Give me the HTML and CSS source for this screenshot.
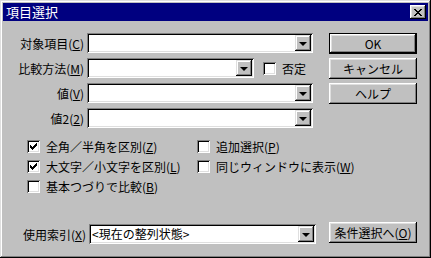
FILE: index.html
```html
<!DOCTYPE html>
<html lang="ja">
<head>
  <meta charset="UTF-8">
  <title>項目選択</title>
  <link rel="stylesheet" href="styles.css">
</head>
<body>
  <div class="window">
    <div class="titlebar">
      <span class="title">項目選択</span>
      <span class="close">
        <svg width="8" height="7" viewBox="0 0 8 7"><path d="M0 0h2v1h1v1h2v-1h1v-1h2v1h-1v1h-1v1h-1v1h1v1h1v1h1v1h-2v-1h-1v-1h-2v1h-1v1h-2v-1h1v-1h1v-1h1v-1h-1v-1h-1v-1h-1z" fill="#000"/></svg>
      </span>
    </div>

    <div class="body">
      <div class="main">
        <div class="fields">
          <label class="lbl">対象項目(<u>C</u>)</label>
          <div class="combo wide"><span class="val"></span><span class="drop"></span></div>

          <label class="lbl">比較方法(<u>M</u>)</label>
          <div class="row-neg">
            <div class="combo short"><span class="val"></span><span class="drop"></span></div>
            <label class="check"><span class="box"></span><span>否定</span></label>
          </div>

          <label class="lbl">値(<u>V</u>)</label>
          <div class="combo wide"><span class="val"></span><span class="drop"></span></div>

          <label class="lbl">値2(<u>2</u>)</label>
          <div class="combo wide"><span class="val"></span><span class="drop"></span></div>
        </div>

        <div class="checks">
          <label class="check"><span class="box checked"></span><span>全角／半角を区別(<u>Z</u>)</span></label>
          <label class="check"><span class="box"></span><span>追加選択(<u>P</u>)</span></label>
          <label class="check"><span class="box checked"></span><span>大文字／小文字を区別(<u>L</u>)</span></label>
          <label class="check"><span class="box"></span><span>同じウィンドウに表示(<u>W</u>)</span></label>
          <label class="check"><span class="box"></span><span>基本つづりで比較(<u>B</u>)</span></label>
        </div>
      </div>

      <div class="buttons">
        <button class="btn default">OK</button>
        <button class="btn">キャンセル</button>
        <button class="btn">ヘルプ</button>
      </div>
    </div>

    <div class="footer">
      <label class="lbl">使用索引(<u>X</u>)</label>
      <div class="combo index"><span class="val">&lt;現在の整列状態&gt;</span><span class="drop"></span></div>
      <button class="btn next">条件選択へ(<u>O</u>)</button>
    </div>
  </div>
</body>
</html>
```

FILE: styles.css
```css
* {
  box-sizing: border-box;
}

body {
  margin: 0;
  background: #c0c0c0;
  font-family: "Noto Sans CJK JP", "DejaVu Sans", sans-serif;
  font-size: 12px;
  color: #000;
}

u {
  text-decoration: underline;
  text-underline-offset: 1px;
}

.window {
  width: 431px;
  height: 258px;
  padding: 3px;
  background: #c0c0c0;
  box-shadow: inset -1px -1px #000, inset 1px 1px #dfdfdf,
              inset -2px -2px #808080, inset 2px 2px #fff;
  display: flex;
  flex-direction: column;
}

/* title bar */
.titlebar {
  height: 18px;
  background: #000080;
  color: #fff;
  display: flex;
  align-items: center;
  justify-content: space-between;
  padding: 0 2px 0 3px;
}

.title {
  font-size: 13px;
  line-height: 18px;
}

.close {
  width: 16px;
  height: 14px;
  background: #c0c0c0;
  display: flex;
  align-items: center;
  justify-content: center;
  box-shadow: inset -1px -1px #000, inset 1px 1px #fff,
              inset -2px -2px #808080, inset 2px 2px #dfdfdf;
}

/* upper part */
.body {
  display: grid;
  grid-template-columns: 326px 88px;
  padding-top: 12px;
}

.fields {
  display: grid;
  grid-template-columns: 81px 226px;
  column-gap: 3px;
  row-gap: 5px;
  grid-auto-rows: 20px;
  align-items: center;
}

.lbl {
  text-align: right;
  white-space: nowrap;
}

.row-neg {
  display: flex;
  align-items: center;
  gap: 9px;
}

/* combo box */
.combo {
  height: 20px;
  background: #fff;
  display: flex;
  align-items: center;
  padding: 2px;
  box-shadow: inset 1px 1px #808080, inset -1px -1px #fff,
              inset 2px 2px #000, inset -2px -2px #dfdfdf;
}

.combo.short {
  width: 167px;
}

.val {
  flex: 1;
  padding-left: 1px;
  line-height: 16px;
  white-space: nowrap;
}

.drop {
  width: 16px;
  height: 16px;
  background: #c0c0c0;
  display: flex;
  align-items: center;
  justify-content: center;
  box-shadow: inset -1px -1px #000, inset 1px 1px #dfdfdf,
              inset -2px -2px #808080, inset 2px 2px #fff;
}

.drop::after {
  content: "";
  border-left: 4px solid transparent;
  border-right: 4px solid transparent;
  border-top: 4px solid #000;
  margin-top: 1px;
}

/* check boxes */
.checks {
  display: grid;
  grid-template-columns: 170px 150px;
  grid-auto-rows: 20px;
  padding-left: 24px;
  margin-top: 8px;
}

.check {
  display: flex;
  align-items: center;
  gap: 6px;
  white-space: nowrap;
}

.box {
  width: 13px;
  height: 13px;
  background: #fff;
  flex: none;
  box-shadow: inset 1px 1px #808080, inset -1px -1px #fff,
              inset 2px 2px #000, inset -2px -2px #dfdfdf;
}

.box.checked {
  background: #fff url("data:image/svg+xml,%3Csvg xmlns='http://www.w3.org/2000/svg' width='13' height='13'%3E%3Cpath d='M3 5h1v1h1v1h1v-1h1v-1h1v-1h1v-1h1v3h-1v1h-1v1h-1v1h-1v1h-1v-1h-1v-1h-1z' fill='%23000'/%3E%3C/svg%3E") no-repeat;
}

/* buttons */
.buttons {
  display: flex;
  flex-direction: column;
  gap: 4px;
}

.btn {
  width: 88px;
  height: 21px;
  padding: 0;
  border: none;
  background: #c0c0c0;
  font: inherit;
  color: #000;
  box-shadow: inset -1px -1px #000, inset 1px 1px #fff,
              inset -2px -2px #808080, inset 2px 2px #dfdfdf;
}

.btn.default {
  border: 1px solid #000;
}

/* footer */
.footer {
  margin-top: auto;
  margin-bottom: 11px;
  display: grid;
  grid-template-columns: 83px 227px 88px;
  column-gap: 3px;
  align-items: center;
}

.footer .btn {
  margin-left: 10px;
  margin-top: -3px;
}
```
